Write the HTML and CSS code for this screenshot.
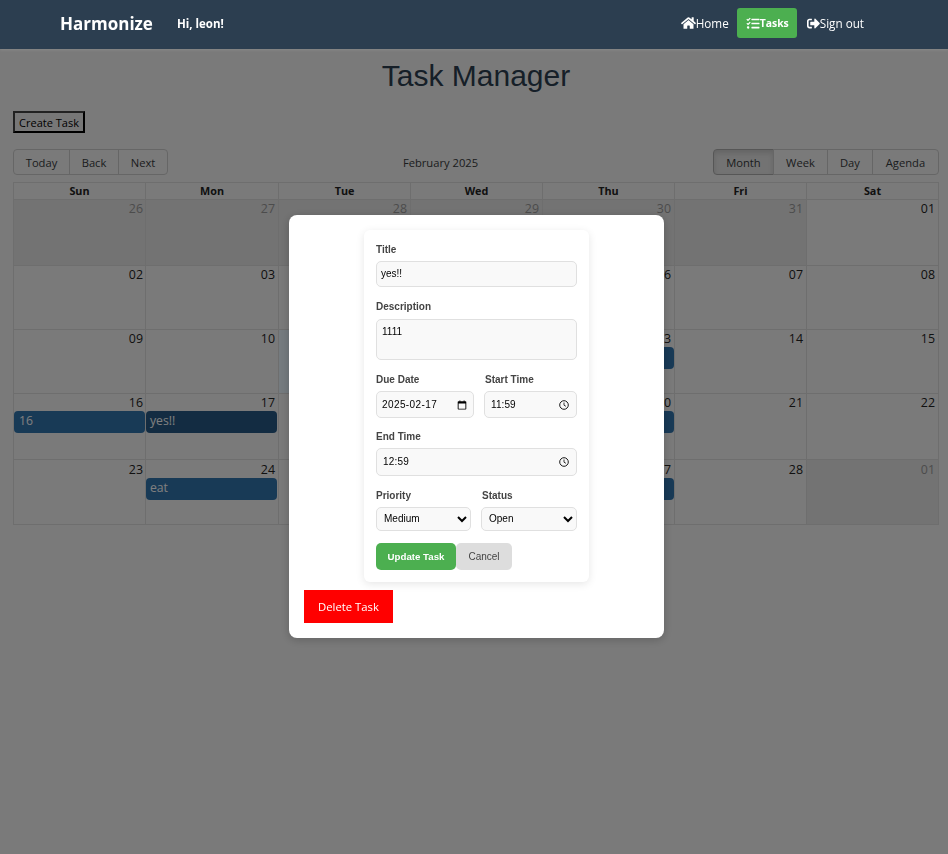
FILE: index.html
```html
<!DOCTYPE html>
<html lang="en">
<head>
<meta charset="utf-8">
<title>Task Manager</title>
<link rel="stylesheet" href="styles.css">
</head>
<body>
<nav class="navbar">
  <div class="nav-left">
    <span class="brand">Harmonize</span>
    <span class="greeting">Hi, leon!</span>
  </div>
  <div class="nav-right">
    <a class="nav-link nav-home"><svg class="ico ico-home" viewBox="0 0 576 512"><path d="M280.37 148.26L96 300.11V464a16 16 0 0 0 16 16l112.06-.29a16 16 0 0 0 15.92-16V368a16 16 0 0 1 16-16h64a16 16 0 0 1 16 16v95.64a16 16 0 0 0 16 16.05L464 480a16 16 0 0 0 16-16V300L295.67 148.26a12.19 12.19 0 0 0-15.3 0zM571.6 251.47L488 182.56V44.05a12 12 0 0 0-12-12h-56a12 12 0 0 0-12 12v72.61L318.47 43a48 48 0 0 0-61 0L4.34 251.47a12 12 0 0 0-1.6 16.9l25.5 31A12 12 0 0 0 45.15 301l235.22-193.74a12.19 12.19 0 0 1 15.3 0L530.9 301a12 12 0 0 0 16.9-1.6l25.5-31a12 12 0 0 0-1.7-16.93z"/></svg>Home</a>
    <a class="nav-link active"><svg class="ico ico-tasks" viewBox="0 0 512 512"><path d="M139.61 35.5a12 12 0 0 0-17 0L58.93 98.81l-22.7-22.12a12 12 0 0 0-17 0L3.53 92.41a12 12 0 0 0 0 17l47.59 47.4a12.78 12.78 0 0 0 17.61 0l15.59-15.62L156.52 69a12.09 12.09 0 0 0 .09-17zm0 159.19a12 12 0 0 0-17 0l-63.68 63.72-22.7-22.1a12 12 0 0 0-17 0L3.53 252a12 12 0 0 0 0 17L51 316.5a12.77 12.77 0 0 0 17.6 0l15.7-15.69 72.2-72.22a12 12 0 0 0 .09-16.9zM64 368c-26.49 0-48.59 21.5-48.59 48S37.53 464 64 464a48 48 0 0 0 0-96zm432 16H208a16 16 0 0 0-16 16v32a16 16 0 0 0 16 16h288a16 16 0 0 0 16-16v-32a16 16 0 0 0-16-16zm0-320H208a16 16 0 0 0-16 16v32a16 16 0 0 0 16 16h288a16 16 0 0 0 16-16V80a16 16 0 0 0-16-16zm0 160H208a16 16 0 0 0-16 16v32a16 16 0 0 0 16 16h288a16 16 0 0 0 16-16v-32a16 16 0 0 0-16-16z"/></svg>Tasks</a>
    <a class="nav-link"><svg class="ico" viewBox="0 0 512 512"><path d="M497 273L329 441c-15 15-41 4.5-41-17v-96H152c-13.3 0-24-10.7-24-24v-96c0-13.3 10.7-24 24-24h136V88c0-21.4 25.9-32 41-17l168 168c9.3 9.4 9.3 24.6 0 34zM192 436v-40c0-6.6-5.4-12-12-12H96c-17.7 0-32-14.3-32-32V160c0-17.7 14.3-32 32-32h84c6.6 0 12-5.4 12-12V76c0-6.6-5.4-12-12-12H96c-53 0-96 43-96 96v192c0 53 43 96 96 96h84c6.6 0 12-5.4 12-12z"/></svg>Sign out</a>
  </div>
</nav>

<main class="page">
  <h1 class="page-title">Task Manager</h1>
  <button class="create-btn">Create Task</button>
  <div class="toolbar">
    <div class="btn-group">
      <button class="tb-btn">Today</button><button class="tb-btn">Back</button><button class="tb-btn">Next</button>
    </div>
    <span class="month-label">February 2025</span>
    <div class="btn-group">
      <button class="tb-btn on">Month</button><button class="tb-btn">Week</button><button class="tb-btn">Day</button><button class="tb-btn">Agenda</button>
    </div>
  </div>
  <div class="calendar">
    <div class="head">Sun</div><div class="head">Mon</div><div class="head">Tue</div><div class="head">Wed</div><div class="head">Thu</div><div class="head">Fri</div><div class="head">Sat</div>

    <div class="cell off"><div class="date">26</div></div>
    <div class="cell off"><div class="date">27</div></div>
    <div class="cell off"><div class="date">28</div></div>
    <div class="cell off"><div class="date">29</div></div>
    <div class="cell off"><div class="date">30</div></div>
    <div class="cell off"><div class="date">31</div></div>
    <div class="cell"><div class="date">01</div></div>

    <div class="cell"><div class="date">02</div></div>
    <div class="cell"><div class="date">03</div></div>
    <div class="cell"><div class="date">04</div></div>
    <div class="cell"><div class="date">05</div></div>
    <div class="cell"><div class="date">06</div></div>
    <div class="cell"><div class="date">07</div></div>
    <div class="cell"><div class="date">08</div></div>

    <div class="cell"><div class="date">09</div></div>
    <div class="cell"><div class="date">10</div></div>
    <div class="cell today"><div class="date">11</div></div>
    <div class="cell"><div class="date">12</div></div>
    <div class="cell"><div class="date">13</div><div class="event"></div></div>
    <div class="cell"><div class="date">14</div></div>
    <div class="cell"><div class="date">15</div></div>

    <div class="cell"><div class="date">16</div><div class="event">16</div></div>
    <div class="cell"><div class="date">17</div><div class="event selected">yes!!</div></div>
    <div class="cell"><div class="date">18</div></div>
    <div class="cell"><div class="date">19</div></div>
    <div class="cell"><div class="date">20</div><div class="event"></div></div>
    <div class="cell"><div class="date">21</div></div>
    <div class="cell"><div class="date">22</div></div>

    <div class="cell"><div class="date">23</div></div>
    <div class="cell"><div class="date">24</div><div class="event">eat</div></div>
    <div class="cell"><div class="date">25</div></div>
    <div class="cell"><div class="date">26</div></div>
    <div class="cell"><div class="date">27</div><div class="event"></div></div>
    <div class="cell"><div class="date">28</div></div>
    <div class="cell off"><div class="date">01</div></div>
  </div>
</main>

<div class="overlay">
  <div class="modal">
    <form class="task-form">
      <div class="group">
        <label class="lbl">Title</label>
        <input class="field f-title" type="text" value="yes!!">
      </div>
      <div class="group">
        <label class="lbl">Description</label>
        <textarea class="field f-desc">1111</textarea>
      </div>
      <div class="group split split-time">
        <div>
          <label class="lbl">Due Date</label>
          <div class="input-wrap">
            <input class="field f-date f-spaced" type="text" value="2025-02-17">
            <svg class="picker" viewBox="0 0 10 10"><path d="M1.5 1.2h7a.8.8 0 0 1 .8.8v6.8a.8.8 0 0 1-.8.8h-7a.8.8 0 0 1-.8-.8V2a.8.8 0 0 1 .8-.8zM1.6 3.6v5.2h6.8V3.6z" fill-rule="evenodd"/><path d="M2.4.4h1v1.4h-1zM6.6.4h1v1.4h-1z"/></svg>
          </div>
        </div>
        <div>
          <label class="lbl">Start Time</label>
          <div class="input-wrap">
            <input class="field f-date f-time" type="text" value="11:59">
            <svg class="picker clock" viewBox="0 0 10 10"><circle cx="5" cy="5" r="4.3" fill="none" stroke="#000" stroke-width=".9"/><path d="M5 2.5v2.7l1.9 1.1" fill="none" stroke="#000" stroke-width=".8"/></svg>
          </div>
        </div>
      </div>
      <div class="group">
        <label class="lbl">End Time</label>
        <div class="input-wrap">
          <input class="field f-end" type="text" value="12:59">
          <svg class="picker clock" viewBox="0 0 10 10"><circle cx="5" cy="5" r="4.3" fill="none" stroke="#000" stroke-width=".9"/><path d="M5 2.5v2.7l1.9 1.1" fill="none" stroke="#000" stroke-width=".8"/></svg>
        </div>
      </div>
      <div class="group split split-sel">
        <div>
          <label class="lbl">Priority</label>
          <select class="field f-sel"><option>Medium</option></select>
        </div>
        <div>
          <label class="lbl">Status</label>
          <select class="field f-sel"><option>Open</option></select>
        </div>
      </div>
      <div class="actions">
        <button type="button" class="update">Update Task</button><button type="button" class="cancel">Cancel</button>
      </div>
    </form>
    <button class="delete">Delete Task</button>
  </div>
</div>
</body>
</html>
```

FILE: styles.css
```css
* { box-sizing: border-box; }
html, body { margin: 0; min-height: 100%; }
body {
  background: #f5f5f5;
  font-family: "Open Sans", "Liberation Sans", sans-serif;
  height: 854px;
  overflow: hidden;
}

.navbar {
  position: relative;
  z-index: 20;
  height: 49px;
  background: #2c3e50;
  color: #fff;
  display: flex;
  justify-content: space-between;
  align-items: center;
  padding: 0 75px 3px 60px;
  box-shadow: 0 1px 3px rgba(255,255,255,.12);
}
.nav-left { display: flex; align-items: center; gap: 24px; }
.brand { font-size: 17px; font-weight: 700; }
.greeting { font-size: 11.5px; font-weight: 700; }
.nav-right { display: flex; align-items: center; font-size: 11.7px; }
.nav-link {
  display: flex;
  align-items: center;
  height: 30px;
  padding: 0 9px;
  border-radius: 3px;
  color: #fff;
}
.nav-home { padding-right: 8px; }
.nav-link.active { background: #4caf50; font-weight: 700; font-size: 10.4px; width: 60px; margin-right: 1px; }
.ico { width: 13px; height: 13px; fill: #fff; display: block; flex: none; }
.ico-home { width: 15px; height: 14px; }
.ico-tasks { width: 14px; height: 13px; }

.page { padding: 0 9px 0 13px; }
.page-title {
  margin: 8px 0 0;
  height: 37px;
  text-align: center;
  font: 400 30px/37px "Liberation Sans", sans-serif;
  color: #2c3e50;
}
.create-btn {
  display: block;
  margin: 17px 0 0;
  height: 22px;
  width: 72px;
  padding: 0;
  border: 2px solid #000;
  border-color: #444 #000 #000 #444;
  background: #efefef;
  color: #000;
  font: 11px "Open Sans", sans-serif;
}
.toolbar {
  margin-top: 16px;
  height: 26px;
  display: flex;
  justify-content: space-between;
  align-items: center;
  color: #373a3c;
}
.month-label { font-size: 11.2px; }
.btn-group { display: flex; }
.tb-btn {
  height: 26px;
  padding: 0;
  margin-left: -1px;
  border: 1px solid #ccc;
  background: transparent;
  color: #373a3c;
  font: 11.2px "Open Sans", sans-serif;
  width: 50px;
}
.tb-btn:first-child { margin-left: 0; width: 57px; border-radius: 4px 0 0 4px; }
.tb-btn:last-child { border-radius: 0 4px 4px 0; }
.tb-btn.on {
  width: 61px;
  background: #e6e6e6;
  border-color: #adadad;
  box-shadow: inset 0 3px 5px rgba(0,0,0,.125);
}
.tb-btn.on + .tb-btn { width: 55px; }
.tb-btn.on + .tb-btn + .tb-btn { width: 46px; }
.tb-btn.on + .tb-btn + .tb-btn + .tb-btn { width: 67px; }

.calendar {
  margin-top: 7px;
  display: grid;
  grid-template-columns: 131px 133px 132px 132px 132px 132px 132px;
  grid-template-rows: 16px 66px 64px 64px 66px 65px;
  border: 1px solid #ddd;
  width: 926px;
}
.head {
  font-size: 10.8px;
  font-weight: 700;
  text-align: center;
  line-height: 16px;
  color: #222;
  border-left: 1px solid #ddd;
}
.head:nth-child(7n+1) { border-left: 0; }
.cell {
  border-left: 1px solid #ddd;
  border-top: 1px solid #ddd;
  padding: 0 1px 0 0;
  min-width: 0;
}
.cell:nth-child(7n+1) { border-left: 0; padding-right: 0; }
.cell:nth-child(n+36) { padding-top: 1px; }
.cell.off { background: #e6e6e6; }
.cell.off .date { color: #999; }
.cell.today { background: #eaf6ff; }
.date {
  height: 17px;
  line-height: 17px;
  padding-right: 2px;
  text-align: right;
  font-size: 12.4px;
  color: #222;
}
.event {
  height: 22px;
  line-height: 20px;
  padding: 0 4px;
  border-radius: 4px;
  background: #3174ad;
  color: #fff;
  font-size: 12.2px;
}
.cell:nth-child(7n+1) .event { padding-left: 5px; }
.cell:nth-child(7n+5) .event { margin-right: -1px; }
.event.selected { background: #265985; }

.overlay {
  position: fixed;
  inset: 0;
  z-index: 10;
  background: rgba(0,0,0,.5);
  display: flex;
  align-items: center;
  justify-content: center;
  padding: 0 0 2px 5px;
}
.modal {
  width: 375px;
  height: 423px;
  background: #fff;
  border-radius: 8px;
  padding: 15px;
  box-shadow: 0 2px 10px rgba(0,0,0,.2);
}
.task-form {
  width: 225px;
  height: 352px;
  margin: 0 auto 8px;
  padding: 14px 12px 0;
  background: #fff;
  border-radius: 6px;
  box-shadow: 0 2px 8px rgba(0,0,0,.1);
  font-family: "Liberation Sans", sans-serif;
}
.group { margin-bottom: 14px; }
.group.split-time { margin-bottom: 13px; }
.lbl {
  display: block;
  height: 12px;
  line-height: 12px;
  margin-bottom: 5px;
  font-size: 10px;
  font-weight: 700;
  color: #444;
}
.split > div:last-child .lbl { padding-left: 1px; }
.field {
  display: block;
  width: 100%;
  margin: 0;
  padding: 0 5px;
  border: 1px solid #e0e0e0;
  border-radius: 5px;
  background: #f9f9f9;
  color: #000;
  font: 10px "Liberation Sans", sans-serif;
}
.f-title { height: 26px; padding-left: 4px; }
.f-desc { height: 41px; padding: 6px 5px; resize: none; margin-top: 6px; }
.f-date { height: 27px; }
.f-end { height: 28px; padding-left: 6px; letter-spacing: .2px; }
.f-spaced { letter-spacing: .4px; }
.f-time { padding-left: 6px; letter-spacing: .1px; }
.f-sel { height: 24px; padding: 0 3px; }
.input-wrap { position: relative; }
.picker {
  position: absolute;
  right: 7px;
  top: 9px;
  width: 10px;
  height: 10px;
  fill: #000;
}
.clock { right: 8px; }
.split { display: grid; gap: 10px; }
.split-time { grid-template-columns: 98px 93px; }
.split-sel { grid-template-columns: 95px 96px; }
.actions { display: flex; margin-top: -2px; }
.update, .cancel {
  height: 27px;
  border: 0;
  border-radius: 5px;
  font: 10px "Liberation Sans", sans-serif;
  padding: 0;
}
.update { width: 80px; background: #4caf50; color: #fff; font-weight: 700; font-size: 9.7px; }
.cancel { width: 56px; background: #ddd; color: #444; }
.delete {
  display: block;
  width: 89px;
  height: 33px;
  padding: 0;
  border: 0;
  background: #f00;
  color: #fff;
  font: 11.3px "Open Sans", sans-serif;
}
```
